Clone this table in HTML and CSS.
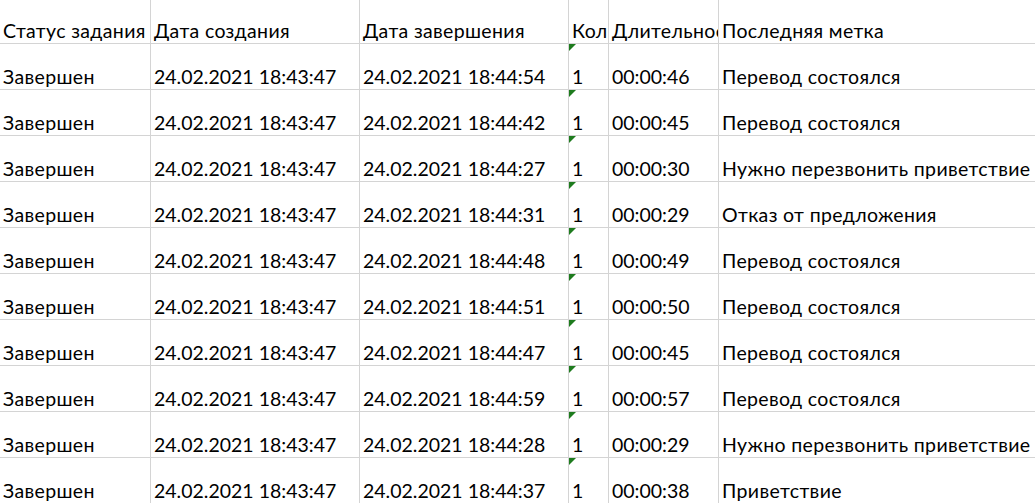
FILE: index.html
```html
<!DOCTYPE html>
<html lang="ru">
<head>
<meta charset="utf-8">
<title>Задания</title>
<link rel="stylesheet" href="styles.css">
</head>
<body>
<div class="sheet">
  <div class="cell head">Статус задания</div>
  <div class="cell head">Дата создания</div>
  <div class="cell head">Дата завершения</div>
  <div class="cell head">Количество</div>
  <div class="cell head">Длительность</div>
  <div class="cell head last">Последняя метка</div>

  <div class="cell txt">Завершен</div><div class="cell">24.02.2021 18:43:47</div><div class="cell">24.02.2021 18:44:54</div><div class="cell flag">1</div><div class="cell">00:00:46</div><div class="cell txt last">Перевод состоялся</div>
  <div class="cell txt">Завершен</div><div class="cell">24.02.2021 18:43:47</div><div class="cell">24.02.2021 18:44:42</div><div class="cell flag">1</div><div class="cell">00:00:45</div><div class="cell txt last">Перевод состоялся</div>
  <div class="cell txt">Завершен</div><div class="cell">24.02.2021 18:43:47</div><div class="cell">24.02.2021 18:44:27</div><div class="cell flag">1</div><div class="cell">00:00:30</div><div class="cell txt last">Нужно перезвонить приветствие</div>
  <div class="cell txt">Завершен</div><div class="cell">24.02.2021 18:43:47</div><div class="cell">24.02.2021 18:44:31</div><div class="cell flag">1</div><div class="cell">00:00:29</div><div class="cell txt last">Отказ от предложения</div>
  <div class="cell txt">Завершен</div><div class="cell">24.02.2021 18:43:47</div><div class="cell">24.02.2021 18:44:48</div><div class="cell flag">1</div><div class="cell">00:00:49</div><div class="cell txt last">Перевод состоялся</div>
  <div class="cell txt">Завершен</div><div class="cell">24.02.2021 18:43:47</div><div class="cell">24.02.2021 18:44:51</div><div class="cell flag">1</div><div class="cell">00:00:50</div><div class="cell txt last">Перевод состоялся</div>
  <div class="cell txt">Завершен</div><div class="cell">24.02.2021 18:43:47</div><div class="cell">24.02.2021 18:44:47</div><div class="cell flag">1</div><div class="cell">00:00:45</div><div class="cell txt last">Перевод состоялся</div>
  <div class="cell txt">Завершен</div><div class="cell">24.02.2021 18:43:47</div><div class="cell">24.02.2021 18:44:59</div><div class="cell flag">1</div><div class="cell">00:00:57</div><div class="cell txt last">Перевод состоялся</div>
  <div class="cell txt">Завершен</div><div class="cell">24.02.2021 18:43:47</div><div class="cell">24.02.2021 18:44:28</div><div class="cell flag">1</div><div class="cell">00:00:29</div><div class="cell txt last">Нужно перезвонить приветствие</div>
  <div class="cell txt">Завершен</div><div class="cell">24.02.2021 18:43:47</div><div class="cell">24.02.2021 18:44:37</div><div class="cell flag">1</div><div class="cell">00:00:38</div><div class="cell txt last">Приветствие</div>
</div>
</body>
</html>
```

FILE: styles.css
```css
html, body {
  margin: 0;
  padding: 0;
  background: #ffffff;
}

body {
  overflow: hidden;
  font-family: Lato, "Open Sans", "Noto Sans", sans-serif;
  font-size: 19.5px;
  color: #000000;
}

.sheet {
  display: grid;
  grid-template-columns: 151px 209px 209px 40px 110px 1fr;
  grid-template-rows: 44px;
  grid-auto-rows: 46px;
  width: 1035px;
}

.cell {
  position: relative;
  box-sizing: border-box;
  display: flex;
  align-items: flex-end;
  padding: 0 0 1px 3px;
  line-height: 22px;
  white-space: nowrap;
  overflow: hidden;
  border-right: 1px solid #d4d4d4;
  border-bottom: 1px solid #d4d4d4;
}

.cell.head,
.cell.txt {
  letter-spacing: 0.35px;
}

.cell.last {
  border-right: none;
}

.flag::before {
  content: "";
  position: absolute;
  top: 0;
  left: 0;
  width: 7px;
  height: 7px;
  background: #1e7b1e;
  clip-path: polygon(0 0, 100% 0, 0 100%);
}
```
